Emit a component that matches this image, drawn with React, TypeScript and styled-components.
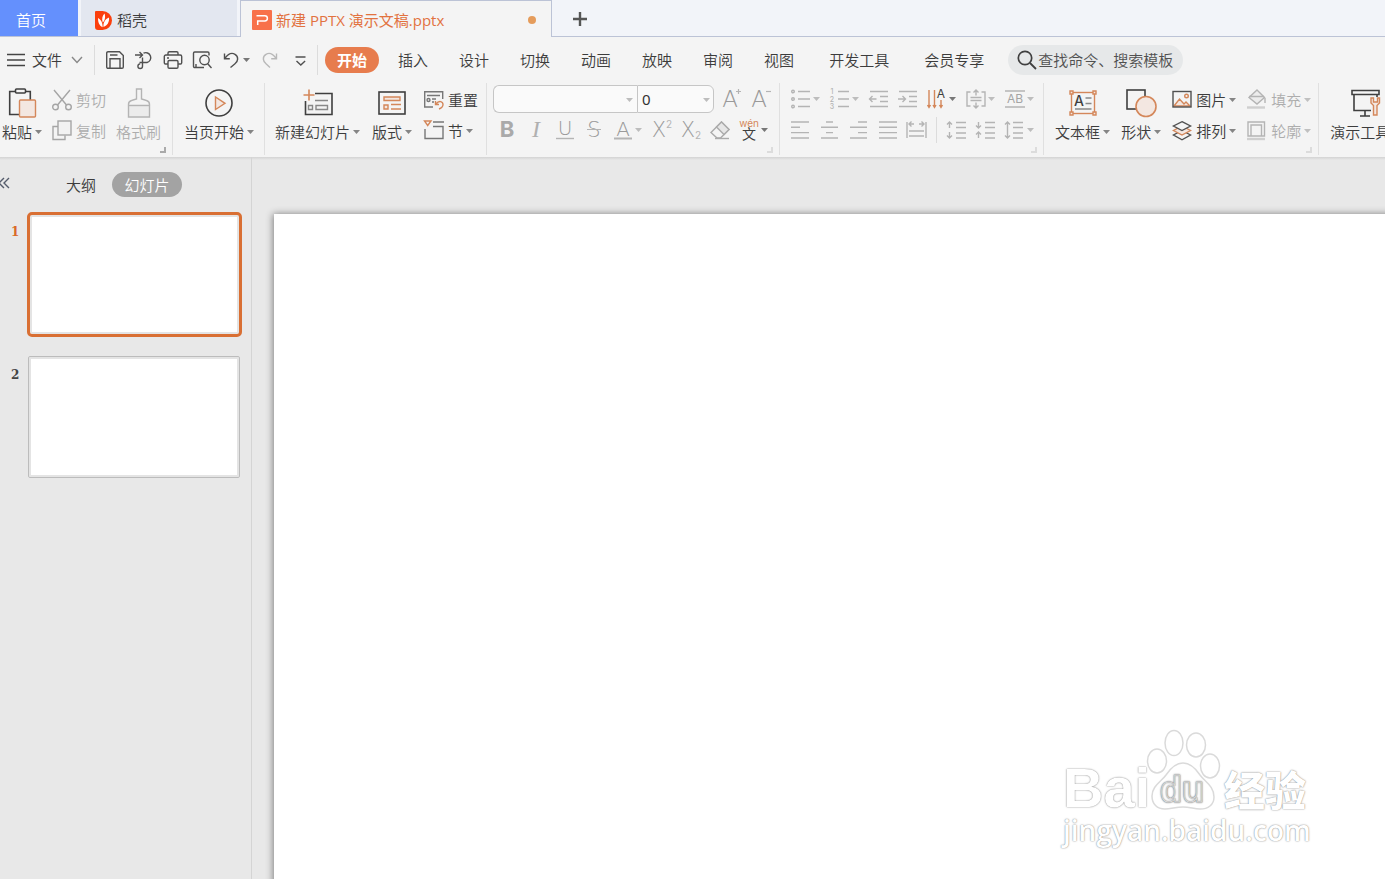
import React from "react";
import styled, { createGlobalStyle, css } from "styled-components";

const ORANGE = "#d4875a";
const DARK = "#3f3f3f";
const MID = "#777777";
const MUTE = "#b4b4b4";
const TINT = "#f3e7e1";
const OUTLINE = "#dadada";

const GlobalStyle = createGlobalStyle`
  * { box-sizing: border-box; }
  body {
    margin: 0;
    overflow: hidden;
    background: #e8e8e8;
    color: #3c3c3c;
    font: 350 15px/20px "Noto Sans", "Noto Sans CJK SC", sans-serif;
  }
  button, input, select { font: inherit; color: inherit; }
  button { border: 0; padding: 0; background: none; cursor: pointer; white-space: nowrap; }
  svg { display: block; flex: none; overflow: visible; }
`;

const Shell = styled.div`
  display: flex;
  flex-direction: column;
  height: 100vh;
`;

/* Document tabs */
const TabStrip = styled.nav`
  display: flex;
  height: 37px;
  background: #f2f4f9;
  box-shadow: inset 0 -1px #bcc3d6;
`;
const HomeTab = styled.button`
  width: 78px;
  height: 36px;
  padding: 4px 0 0 16px;
  text-align: left;
  color: #fff;
  background: #6490fd;
`;
const DocerTab = styled.button`
  display: flex;
  align-items: center;
  gap: 5px;
  width: 156px;
  height: 36px;
  margin: 0 3px;
  padding: 4px 14px 0;
  background: #e3e7f0;
`;
const FileTab = styled.button`
  display: flex;
  align-items: center;
  gap: 4px;
  width: 312px;
  padding: 2px 15px 0 11px;
  font-family: "Open Sans", "Noto Sans CJK SC", sans-serif;
  font-weight: 400;
  color: #e2723f;
  background: #f4f4f4;
  border: 1px solid #bcc3d6;
  border-bottom: 0;
`;
const UnsavedDot = styled.span`
  width: 8px;
  height: 8px;
  margin-left: auto;
  border-radius: 50%;
  background: #e59c5b;
`;
const NewTab = styled.button`
  display: flex;
  align-items: center;
  justify-content: center;
  width: 55px;
  height: 38px;
`;

/* Menu row */
const MenuRow = styled.div`
  display: flex;
  align-items: center;
  flex: none;
  height: 46px;
  background: #f4f4f4;
`;
const FileMenu = styled.button`
  display: flex;
  align-items: center;
  width: 94px;
  padding-left: 7px;
  svg + span { margin: 0 9px 0 7px; }
`;
const Rule = styled.span<{ $h: number; $gap: number }>`
  flex: none;
  width: 1px;
  height: ${(p) => p.$h}px;
  margin: 0 ${(p) => p.$gap}px;
  background: #dcdcdc;
`;
const QuickAccess = styled.div`
  display: flex;
  align-items: center;
  padding: 0 2px 0 5px;
  button:last-child { margin-left: 2px; }
`;
const MenuTabs = styled.nav`
  display: flex;
  gap: 7px;
  margin: 0 12px 0 7px;
`;
const MenuTab = styled.button<{ $active?: boolean; $spaced?: boolean }>`
  height: 26px;
  padding: 0 12px;
  border-radius: 13px;
  margin-left: ${(p) => (p.$spaced ? 4 : 0)}px;
  ${(p) =>
    p.$active &&
    css`
      color: #fff;
      font-weight: 700;
      background: #e77c4d;
    `}
`;
const Search = styled.label`
  display: flex;
  align-items: center;
  flex: none;
  gap: 1px;
  width: 175px;
  height: 30px;
  padding-left: 9px;
  border-radius: 15px;
  background: #e6e8e9;
  input {
    flex: 1;
    min-width: 0;
    height: 24px;
    padding: 0;
    border: 0;
    outline: 0;
    background: none;
  }
  input::placeholder { color: #505050; opacity: 1; }
`;

/* Ribbon */
const Ribbon = styled.div`
  display: flex;
  flex: none;
  height: 74px;
  overflow: hidden;
  background: #f4f4f4;
`;
const Group = styled.section<{ $left: number; $right: number; $gap?: number }>`
  position: relative;
  display: flex;
  flex: none;
  gap: ${(p) => p.$gap ?? 10}px;
  height: 72px;
  padding: 0 ${(p) => p.$right}px 0 ${(p) => p.$left}px;
  border-right: 1px solid #e0e0e0;
`;
const Launcher = styled.span<{ $faint?: boolean }>`
  position: absolute;
  right: 6px;
  bottom: 2px;
  width: 6px;
  height: 6px;
  border: solid ${(p) => (p.$faint ? "#dcdcdc" : "#aaa")};
  border-width: 0 2px 2px 0;
`;
const BigButton = styled.button`
  display: flex;
  flex-direction: column;
  align-items: center;
  gap: 3px;
  padding-top: 4px;
  height: 64px;
  &:disabled { color: #adadad; }
`;
const BigIcon = styled.span`
  display: flex;
  align-items: center;
  height: 32px;
`;
const Label = styled.span`
  display: flex;
  align-items: center;
  gap: 3px;
`;
const SmallColumn = styled.div`
  display: flex;
  flex-direction: column;
  gap: 5px;
  padding-top: 4px;
`;
const SmallButton = styled.button`
  display: flex;
  align-items: center;
  gap: 4px;
  height: 26px;
  &:disabled { color: #adadad; }
`;
const ToolRows = styled.div`
  display: flex;
  flex-direction: column;
  gap: 4px;
  padding-top: 2px;
`;
const ToolRow = styled.div<{ $tall?: boolean }>`
  display: flex;
  align-items: center;
  height: ${(p) => (p.$tall ? 28 : 26)}px;
`;
const ToolButton = styled.button<{ $menu?: boolean }>`
  display: flex;
  align-items: center;
  flex: none;
  gap: 2px;
  width: ${(p) => (p.$menu ? 39 : 29)}px;
  height: 26px;
  padding-left: 5px;
`;
const Combo = styled.span<{ $w: number; $end?: boolean }>`
  position: relative;
  display: block;
  width: ${(p) => p.$w}px;
  height: 28px;
  margin-left: ${(p) => (p.$end ? 0 : 1)}px;
  margin-right: ${(p) => (p.$end ? 3 : 0)}px;
  select {
    appearance: none;
    width: 100%;
    height: 28px;
    padding: 0 0 0 ${(p) => (p.$end ? 4 : 8)}px;
    font-weight: 400;
    color: #333;
    background: #fafafa;
    border: 1px solid #c6c6c6;
    border-right-width: ${(p) => (p.$end ? 1 : 0)}px;
    border-radius: ${(p) => (p.$end ? "0 6px 6px 0" : "6px 0 0 6px")};
  }
  svg { position: absolute; right: 4px; top: 13px; pointer-events: none; }
`;

/* Work area */
const Work = styled.main`
  display: flex;
  flex: 1;
  min-height: 0;
  background: linear-gradient(#d3d3d3, #e8e8e8 3px);
`;
const Pane = styled.aside`
  flex: none;
  width: 252px;
  padding-top: 15px;
  border-right: 1px solid #d4d4d4;
`;
const PaneHead = styled.div`
  display: flex;
  height: 25px;
`;
const Collapse = styled.button`
  width: 54px;
  height: 22px;
`;
const PaneTab = styled.button<{ $on?: boolean }>`
  height: 25px;
  padding: 0 12px;
  border-radius: 13px;
  margin-right: 4px;
  ${(p) =>
    p.$on &&
    css`
      width: 70px;
      color: #fff;
      background: #a3a3a3;
    `}
`;
const SlideList = styled.ol`
  display: flex;
  flex-direction: column;
  gap: 18px;
  margin: 0;
  padding: 15px 9px 0 11px;
  list-style: none;
`;
const SlideItem = styled.li<{ $on?: boolean }>`
  display: flex;
  align-items: flex-start;
  font: 700 12px/16px "DejaVu Serif", serif;
  color: ${(p) => (p.$on ? "#d96a26" : "#444")};
  span { width: 16px; padding-top: 12px; }
`;
const Thumb = styled.button<{ $on?: boolean }>`
  flex: 1;
  height: 125px;
  border: 3px solid #d96f33;
  border-radius: 5px;
  background: #fff;
  box-shadow: inset 0 0 0 2px #e4e4e4;
  ${(p) =>
    !p.$on &&
    css`
      height: 122px;
      margin: 1px 2px 0 1px;
      border: 1px solid #bcbcbc;
      border-radius: 2px;
      box-shadow: inset 0 0 0 2px #e4e4e4;
    `}
`;
const Canvas = styled.div`
  position: relative;
  flex: 1;
  display: flex;
  padding: 57px 0 0 22px;
  overflow: hidden;
`;
const Slide = styled.div`
  flex: 1;
  margin-right: -12px;
  margin-bottom: -12px;
  background: #fff;
  box-shadow: -1px 0 7px rgba(0, 0, 0, 0.45);
`;
const Watermark = styled.div`
  position: absolute;
  right: 75px;
  bottom: 32px;
  width: 247px;
  color: #fff;
  text-shadow: 0 0 2px rgba(0, 0, 0, 0.35), 0 0 1px rgba(0, 0, 0, 0.35);
`;
const Brand = styled.div`
  display: flex;
  align-items: flex-end;
  height: 84px;
`;
const Bai = styled.span`
  width: 84px;
  font: 700 56px/50px "Liberation Sans", sans-serif;
`;
const Jingyan = styled.span`
  margin-left: 1px;
  font: 900 41px/50px "Noto Sans CJK SC", sans-serif;
`;
const Site = styled.div`
  font: 600 28px/34px "Open Sans", sans-serif;
`;

type IconProps = { w?: number; h?: number; c?: string; children: React.ReactNode };
const Icon = ({ w = 20, h = 20, c = MID, children }: IconProps) => (
  <svg width={w} height={h} viewBox={`0 0 ${w} ${h}`} fill="none" stroke={c} strokeWidth="1.4" aria-hidden="true">
    {children}
  </svg>
);
type GlyphProps = { x: number; y: number; size: number; c?: string; weight?: number; italic?: boolean; family?: string; children: string };
const Glyph = ({ x, y, size, c = "#9a9a9a", weight = 200, italic, family = "DejaVu Sans, sans-serif", children }: GlyphProps) => (
  <text x={x} y={y} fontSize={size} fill={c} stroke="none" fontWeight={weight} fontStyle={italic ? "italic" : "normal"} fontFamily={family} textAnchor="middle">
    {children}
  </text>
);
const SANS = "Inter, sans-serif";
const Caret = ({ c = "#858585" }: { c?: string }) => (
  <svg width="7" height="4" viewBox="0 0 7 4" aria-hidden="true">
    <path d="M0 0h7L3.5 4z" fill={c} />
  </svg>
);

type ActionProps = { label: string; icon: React.ReactNode; menu?: boolean; disabled?: boolean };
const Big = ({ label, icon, menu, disabled }: ActionProps) => (
  <BigButton disabled={disabled}>
    <BigIcon>{icon}</BigIcon>
    <Label>{label}{menu && <Caret />}</Label>
  </BigButton>
);
const Small = ({ label, icon, menu, disabled }: ActionProps) => (
  <SmallButton disabled={disabled}>
    {icon}
    <Label>{label}{menu && <Caret c={disabled ? "#c0c0c0" : undefined} />}</Label>
  </SmallButton>
);
const Tool = ({ name, menu, dark, c = MUTE, children }: { name: string; menu?: boolean; dark?: boolean; c?: string; children: React.ReactNode }) => (
  <ToolButton aria-label={name} $menu={menu}>
    <Icon c={c}>{children}</Icon>
    {menu && <Caret c={dark ? "#777" : "#bdbdbd"} />}
  </ToolButton>
);

const QUICK = "#505050";
const tabs = ["开始", "插入", "设计", "切换", "动画", "放映", "审阅", "视图", "开发工具", "会员专享"];

export default function App() {
  return (
    <Shell>
      <GlobalStyle />
      <TabStrip>
        <HomeTab>首页</HomeTab>
        <DocerTab>
          <svg width="17" height="19" viewBox="0 0 17 19" aria-hidden="true">
            <path d="M1 0h6.500a9.500 9.500 0 0 1 0 19H3a3 3 0 0 1-3-3V1a1 1 0 0 1 1-1z" fill="#fb3f0d" />
            <path d="M9.500 2.500c-2 2-3 5-1.800 9 2.300-1.500 3-6 1.800-9zM3 7c0 4 1 7.500 4.600 9.300C7.800 12 6 8.500 3 7zM14 6.500c-4 1.500-5.800 5-5.500 9.500C12.500 14.500 14.500 11 14 6.500z" fill="#fff" />
          </svg>
          <span>稻壳</span>
        </DocerTab>
        <FileTab>
          <svg width="20" height="20" viewBox="0 0 20 20" fill="none" aria-hidden="true">
            <rect width="20" height="20" rx="1" fill="#f8714a" />
            <path d="M4.500 5.700h8.300a2.600 2.600 0 0 1 0 5.200H5.700v4" stroke="#fff" strokeWidth="1.500" />
          </svg>
          <span>新建 PPTX 演示文稿.pptx</span>
          <UnsavedDot />
        </FileTab>
        <NewTab aria-label="新建标签">
          <Icon w={16} h={16} c="#555"><path d="M8 1v14M1 8h14" strokeWidth="2.400" /></Icon>
        </NewTab>
      </TabStrip>

      <MenuRow>
        <FileMenu>
          <Icon w={18} h={14} c="#444"><path d="M0 1.500h18M0 7h18M0 12.500h18" /></Icon>
          <span>文件</span>
          <Icon w={12} h={8} c="#888"><path d="M1 1l5 5.500L11 1" /></Icon>
        </FileMenu>
        <Rule $h={30} $gap={0} />
        <QuickAccess>
          <Tool name="保存" c={QUICK}>
            <path d="M1.700 3a1.300 1.300 0 0 1 1.300-1.300h11.500l3.800 3.800V17a1.300 1.300 0 0 1-1.300 1.300H3A1.300 1.300 0 0 1 1.700 17zM5 18V8.700h10V18M5 5h7.500" />
          </Tool>
          <Tool name="输出为PDF" c={QUICK}>
            <path d="M1 5h7.500M5.500 2l3 3-3 3M9.500 3.200A5 5 0 1 1 13 12.500H5.500M8.500 7.500v8.700a2.300 2.300 0 1 1-2.300-2.300" />
          </Tool>
          <Tool name="打印" c={QUICK}>
            <path d="M5 5V3a1.300 1.300 0 0 1 1.300-1.300h7.400A1.300 1.300 0 0 1 15 3v2M5 14H2.500a1.200 1.200 0 0 1-1.200-1.200V6.500A1.500 1.500 0 0 1 2.800 5h14.400a1.500 1.500 0 0 1 1.500 1.500v6.300a1.200 1.200 0 0 1-1.200 1.200H15M6.300 10.500h7.400A1.300 1.300 0 0 1 15 11.800V17a1.300 1.300 0 0 1-1.300 1.300H6.300A1.300 1.300 0 0 1 5 17v-5.200a1.300 1.300 0 0 1 1.300-1.300zM4 8h2" />
          </Tool>
          <Tool name="打印预览" c={QUICK}>
            <path d="M12 17.500H2.700A1.200 1.200 0 0 1 1.500 16.300V3.200A1.200 1.200 0 0 1 2.700 2h13.100A1.200 1.200 0 0 1 17 3.200v2.300M4 14v3" />
            <circle cx="12.500" cy="10" r="4.700" />
            <path d="M15.500 13.500l4 4.500" />
          </Tool>
          <Tool name="撤销" menu dark c={QUICK}>
            <path d="M3.500 3.500v5.300h5.300M3.800 8.500C7 4 11 2.500 14 4.300c4 2.500 3 7.200 0 9.500l-4.500 3.700" />
          </Tool>
          <Tool name="恢复" c="#b8b8b8">
            <path d="M16.500 3.500v5.300h-5.300M16.200 8.500C13 4 9 2.500 6 4.300c-4 2.500-3 7.200 0 9.500l4 3.700" />
          </Tool>
          <Tool name="自定义快速访问工具栏" c={QUICK}>
            <path d="M4.500 7h10M5.500 11l4.300 4 4.300-4" />
          </Tool>
        </QuickAccess>
        <Rule $h={30} $gap={0} />
        <MenuTabs>
          {tabs.map((t, i) => (
            <MenuTab key={t} $active={i === 0} $spaced={i > 7}>{t}</MenuTab>
          ))}
        </MenuTabs>
        <Search>
          <Icon c={DARK}><circle cx="8" cy="8" r="6.700" strokeWidth="1.700" /><path d="M13 13l6 6" strokeWidth="1.800" /></Icon>
          <input aria-label="搜索" placeholder="查找命令、搜索模板" />
        </Search>
      </MenuRow>

      <Ribbon>
        <Group $left={2} $right={11}>
          <Big label="粘贴" menu icon={
            <Icon w={28} h={30} c={DARK}>
              <path d="M7 3.500H1.700v23H11M18 3.500h4.300V12" strokeWidth="1.600" />
              <rect x="7.500" y="1" width="10" height="4" rx="1" strokeWidth="1.600" />
              <rect x="11.500" y="12" width="16" height="17" rx="1" stroke={ORANGE} fill={TINT} />
            </Icon>} />
          <SmallColumn>
            <Small label="剪切" disabled icon={
              <Icon c="#a5a5a5">
                <path d="M2 0l12.500 15M18 0L5.500 15" /><circle cx="3.500" cy="17" r="2.800" /><circle cx="16.500" cy="17" r="2.800" />
              </Icon>} />
            <Small label="复制" disabled icon={
              <Icon c="#a5a5a5"><path d="M6 5.500H1v13h12v-4" /><rect x="6" y="0" width="13" height="14" fill="#f2f2f2" /></Icon>} />
          </SmallColumn>
          <Big label="格式刷" disabled icon={
            <Icon w={24} h={30} c={MUTE}>
              <path d="M2 18.500h20v10H2z" fill="#ececec" stroke="none" />
              <path d="M9.500 11V1h5v10l5 1.500a4 4 0 0 1 3 4V29h-21V16.500a4 4 0 0 1 3-4zM1.500 17.500h21" />
            </Icon>} />
          <Launcher />
        </Group>

        <Group $left={11} $right={10}>
          <Big label="当页开始" menu icon={
            <Icon w={28} h={28} c={DARK}>
              <circle cx="14" cy="14" r="13" strokeWidth="1.600" />
              <path d="M10.500 8v12.500l9.500-6.200z" stroke={ORANGE} fill={TINT} />
            </Icon>} />
        </Group>

        <Group $left={10} $right={8} $gap={12}>
          <Big label="新建幻灯片" menu icon={
            <Icon w={30} h={28} c={DARK}>
              <path d="M12 4.500h17v21H2.500V12" strokeWidth="1.600" />
              <path d="M6 .500v11M.500 6h11" stroke={ORANGE} strokeWidth="1.600" />
              <path d="M12 11.500h13M5.500 16.500h4v4h-4zM13 16.500h11.500v4H13z" stroke="#888" />
            </Icon>} />
          <Big label="版式" menu icon={
            <Icon w={28} h={24} c={DARK}>
              <rect x="1" y="1" width="26" height="22" strokeWidth="1.600" />
              <path d="M6 6h16v3.500H6zM6 14h4v4H6zM13 13.500h10M13 18h10" stroke={ORANGE} fill={TINT} />
            </Icon>} />
          <SmallColumn>
            <Small label="重置" icon={
              <Icon>
                <path d="M9 17H.700V1.700h18V9M3 5.500h13" /><circle cx="4.500" cy="10" r="1.500" /><path d="M8 9h4M8 12h2" />
                <path d="M11.500 11v3.500H15M12 14c3-4 7-2.500 7 .500 0 2-1.500 3.500-4 4.500" stroke={ORANGE} />
              </Icon>} />
            <Small label="节" menu icon={
              <Icon><path d="M.500 0h6.500L3.700 4.500z" stroke={ORANGE} /><path d="M9 1h11M9 5.500h10V17.500H1V8" /></Icon>} />
          </SmallColumn>
        </Group>

        <Group $left={5} $right={4}>
          <ToolRows>
            <ToolRow $tall>
              <Combo $w={144}><select aria-label="字体"><option> </option></select><Caret c="#bdbdbd" /></Combo>
              <Combo $w={77} $end><select aria-label="字号"><option>0</option></select><Caret c="#bdbdbd" /></Combo>
              <Tool name="增大字号" c="#b4b4b4"><Glyph x={8} y={18} size={23}>A</Glyph><path d="M14 2.500h5M16.500 0v5" strokeWidth="1.200" /></Tool>
              <Tool name="减小字号" c="#b4b4b4"><Glyph x={8} y={18} size={23}>A</Glyph><path d="M15 2.500h5" strokeWidth="1.200" /></Tool>
            </ToolRow>
            <ToolRow>
              <Tool name="加粗"><Glyph x={10} y={17} size={22} weight={700} family={SANS} c="#aaa">B</Glyph></Tool>
              <Tool name="倾斜"><Glyph x={10} y={17} size={24} weight={400} italic family="Liberation Serif, serif" c="#b0b0b0">I</Glyph></Tool>
              <Tool name="下划线"><Glyph x={10} y={15} size={20}>U</Glyph><path d="M1 18.500h18" /></Tool>
              <Tool name="删除线"><Glyph x={10} y={17} size={21}>S</Glyph><path d="M3 9.500h14" strokeWidth="1" /></Tool>
              <Tool name="字体颜色" menu><Glyph x={10} y={16} size={20}>A</Glyph><path d="M1 18.500h18" strokeWidth="2" /></Tool>
              <Tool name="上标"><Glyph x={7} y={17} size={21}>X</Glyph><Glyph x={17} y={8} size={10} weight={400} family={SANS} c={MUTE}>2</Glyph></Tool>
              <Tool name="下标"><Glyph x={7} y={17} size={21}>X</Glyph><Glyph x={17} y={19} size={10} weight={400} family={SANS} c={MUTE}>2</Glyph></Tool>
              <Tool name="清除格式" c="#aaa"><path d="M11.500 2L19 9.500 10.500 18H7L1 12.500z" /><path d="M11.500 2L19 9.500l-5 5L6.500 7z" fill="#e6e6e6" /><path d="M5 18.500h14" /></Tool>
              <Tool name="拼音指南" menu dark>
                <Glyph x={10} y={7} size={10} weight={400} c={ORANGE} family={SANS}>wén</Glyph>
                <Glyph x={10} y={19} size={14} weight={400} c={DARK} family="Noto Sans CJK SC, sans-serif">文</Glyph>
              </Tool>
            </ToolRow>
          </ToolRows>
          <Launcher $faint />
        </Group>

        <Group $left={6} $right={4}>
          <ToolRows>
            <ToolRow $tall>
              <Tool name="项目符号" menu><path d="M7 2.500h12M7 10h12M7 17.500h12" /><circle cx="2" cy="2.500" r="1.300" /><circle cx="2" cy="10" r="1.300" /><circle cx="2" cy="17.500" r="1.300" /></Tool>
              <Tool name="编号" menu>
                <path d="M8 2.500h11M8 10h11M8 17.500h11" />
                <Glyph x={2} y={5} size={7} weight={500} c={MUTE} family={SANS}>1</Glyph>
                <Glyph x={2} y={13} size={7} weight={500} c={MUTE} family={SANS}>2</Glyph>
                <Glyph x={2} y={20} size={7} weight={500} c={MUTE} family={SANS}>3</Glyph>
              </Tool>
              <Tool name="减少缩进"><path d="M1 2.500h18M11 7.500h8M11 12.500h8M1 17.500h18M.500 10H7.500M3.500 7l-3 3 3 3" /></Tool>
              <Tool name="增加缩进"><path d="M1 2.500h18M11 7.500h8M11 12.500h8M1 17.500h18M0 10h7.500M4.500 7l3 3-3 3" /></Tool>
              <Tool name="文字方向" menu dark c={ORANGE}><path d="M2 1v17M7.500 1v17M14 11v7M.500 16L2 18.500 3.500 16M6 16l1.500 2.500L9 16M12.500 16l1.500 2.500 1.500-2.500" /><Glyph x={14} y={9} size={12} weight={400} c={DARK} family={SANS}>A</Glyph></Tool>
              <Tool name="对齐文本" menu><path d="M4.500 3H1v14h3.500M15.500 3H19v14h-3.500M4.500 8.500h11M4.500 11.500h11M10 6.500V1M7.500 3.500L10 1l2.500 2.500M10 13.500V19M7.500 16.500L10 19l2.500-2.500" /></Tool>
              <Tool name="字符缩放" menu><path d="M0 2h20M0 18h20" /><Glyph x={10} y={14} size={12} weight={400} family={SANS} c="#a4a4a4">AB</Glyph></Tool>
            </ToolRow>
            <ToolRow>
              <Tool name="左对齐"><path d="M0 2h18M0 7.300h9M0 12.600h18M0 18h18" /></Tool>
              <Tool name="居中"><path d="M6 2h7M1 7.300h17M6 12.600h7M1 18h17" /></Tool>
              <Tool name="右对齐"><path d="M9 2h9M1 7.300h17M9 12.600h9M1 18h17" /></Tool>
              <Tool name="两端对齐"><path d="M1 2h18M1 7.300h18M1 12.600h18M1 18h18" /></Tool>
              <Tool name="分散对齐"><path d="M0 2v16M19 2v16M2 11h15M2 16h15M2 4h5M4.500 1.500L2 4l2.500 2.500M17 4h-5M14.500 1.500L17 4l-2.500 2.500" /></Tool>
              <Rule $h={26} $gap={5} />
              <Tool name="增大段落间距"><path d="M9 2.500h10M9 7.500h10M9 13h10M9 18h10M2.500 8V2M0 4.500L2.500 2 5 4.500M2.500 12v6M0 15.500L2.500 18 5 15.500" /></Tool>
              <Tool name="减小段落间距"><path d="M9 2.500h10M9 7.500h10M9 13h10M9 18h10M2.500 2v6M0 5.500L2.500 8 5 5.500M2.500 18v-6M0 14.500L2.500 12 5 14.500" /></Tool>
              <Tool name="行距" menu><path d="M8 2.500h10M8 7.500h10M8 13h10M8 18h10M2.500 2v16M0 4.500L2.500 2 5 4.500M0 15.500L2.500 18 5 15.500" /></Tool>
            </ToolRow>
          </ToolRows>
          <Launcher $faint />
        </Group>

        <Group $left={11} $right={7} $gap={11}>
          <Big label="文本框" menu icon={
            <Icon w={28} h={26} c={ORANGE}>
              <rect x="2.500" y="2.500" width="23" height="21" />
              <path d="M1 1h3v3H1zM24 1h3v3h-3zM1 22h3v3H1zM24 22h3v3h-3z" fill={TINT} />
              <Glyph x={10} y={16} size={14} weight={500} c={DARK} family={SANS}>A</Glyph>
              <path d="M16.500 8h6M16.500 13.500h6M6 19h16.500" stroke="#888" />
            </Icon>} />
          <Big label="形状" menu icon={
            <Icon w={30} h={28} c={DARK}>
              <rect x="1" y="1" width="18" height="19" strokeWidth="1.600" />
              <circle cx="20" cy="17.500" r="10" stroke={ORANGE} fill={TINT} strokeWidth="1.600" />
            </Icon>} />
          <SmallColumn>
            <Small label="图片" menu icon={
              <Icon c={QUICK}><path d="M2 16l5.500-7 4.500 5 2-2 4 4z" fill={TINT} stroke={ORANGE} /><circle cx="14.500" cy="6" r="1.800" stroke={ORANGE} /><rect x="1" y="1.500" width="18" height="15.500" /></Icon>} />
            <Small label="排列" menu icon={
              <Icon c={QUICK}><path d="M10 9.500l8.500 4.500-8.500 4.800L1.500 14z" fill="#f4f4f4" /><path d="M10 5l8.500 4.500L10 14 1.500 9.500z" stroke={ORANGE} fill={TINT} /><path d="M10 .700l8.500 4.300L10 9.500 1.500 5z" fill="#f4f4f4" /></Icon>} />
          </SmallColumn>
          <SmallColumn>
            <Small label="填充" menu disabled icon={
              <Icon c={MUTE}><path d="M10 0l7.500 7.500L10 14 2 7.500z" fill="#ececec" /><path d="M2 6.500h15M18 8v5" /><path d="M0 17.500h18" strokeWidth="2.400" stroke="#cfcfcf" /></Icon>} />
            <Small label="轮廓" menu disabled icon={
              <Icon c={MUTE}><path d="M1 1h16.500v14H1zM4 4h10.500v11H4z" /><path d="M0 18h18" strokeWidth="2.400" stroke="#cfcfcf" /></Icon>} />
          </SmallColumn>
          <Launcher $faint />
        </Group>

        <Group $left={11} $right={10}>
          <Big label="演示工具" menu icon={
            <Icon w={29} h={28} c={DARK}>
              <path d="M1 1.500h27v4H1zM3 5.500v16h17M26 5.500V8M14 22v4.500M9 27h10" strokeWidth="1.600" />
              <path d="M20 9v5l2.500 2.500v9.500h3.500V16.500L28.500 14V9l-2 0v4h-4V9z" stroke={ORANGE} fill={TINT} />
            </Icon>} />
        </Group>
      </Ribbon>

      <Work>
        <Pane>
          <PaneHead>
            <Collapse aria-label="收起窗格">
              <Icon w={10} h={12} c="#555c6c"><path d="M4 1L-1 6l5 5M9 1L4 6l5 5" /></Icon>
            </Collapse>
            <PaneTab>大纲</PaneTab>
            <PaneTab $on>幻灯片</PaneTab>
          </PaneHead>
          <SlideList>
            <SlideItem $on><span>1</span><Thumb $on aria-label="幻灯片 1" /></SlideItem>
            <SlideItem><span>2</span><Thumb aria-label="幻灯片 2" /></SlideItem>
          </SlideList>
        </Pane>
        <Canvas>
          <Slide />
          <Watermark>
            <Brand>
              <Bai>Bai</Bai>
              <svg width="76" height="84" viewBox="0 0 76 84" fill="#fff" stroke={OUTLINE} strokeWidth="1.500" aria-hidden="true">
                <ellipse cx="10" cy="32" rx="9.500" ry="12" />
                <ellipse cx="27" cy="14" rx="9" ry="12.500" />
                <ellipse cx="49" cy="16" rx="9.500" ry="12" />
                <ellipse cx="63" cy="37" rx="9.500" ry="12" />
                <path d="M36 34c8 0 13 6 17 12 5 7 14 11 14 22 0 8-6 12-14 12-6 0-10-2-17-2s-12 2-18 2C10 80 5 75 5 67c0-10 9-14 14-21 4-6 9-12 17-12z" />
                <text x="35" y="73" fontFamily="Liberation Sans, sans-serif" fontSize="36" fontWeight="700" textAnchor="middle" strokeWidth="1">du</text>
              </svg>
              <Jingyan>经验</Jingyan>
            </Brand>
            <Site>jingyan.baidu.com</Site>
          </Watermark>
        </Canvas>
      </Work>
    </Shell>
  );
}
